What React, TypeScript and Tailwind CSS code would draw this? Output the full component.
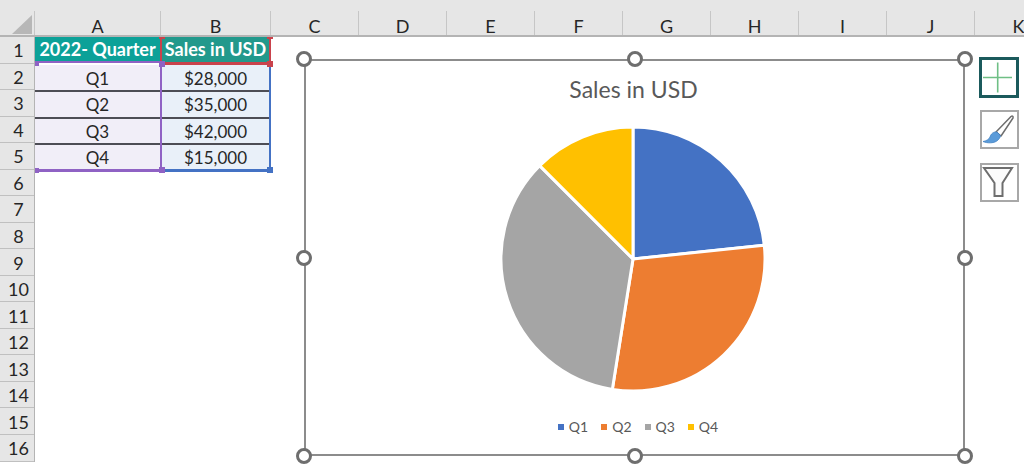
const columns = [
  { label: "A", className: "w-[126px]" },
  { label: "B", className: "w-[110px]" },
  { label: "C", className: "w-[88px]" },
  { label: "D", className: "w-[88px]" },
  { label: "E", className: "w-[88px]" },
  { label: "F", className: "w-[88px]" },
  { label: "G", className: "w-[88px]" },
  { label: "H", className: "w-[88px]" },
  { label: "I", className: "w-[88px]" },
  { label: "J", className: "w-[88px]" },
  { label: "K", className: "w-[88px]" },
];

const rows = [
  ["Q1", "$28,000"],
  ["Q2", "$35,000"],
  ["Q3", "$42,000"],
  ["Q4", "$15,000"],
];

const rowNumbers = Array.from({ length: 16 }, (_, i) => i + 1);

// Pie slices, degrees clockwise from 12 o'clock
const slices = [
  { from: 0, to: 84, color: "#4472c4" },
  { from: 84, to: 189, color: "#ed7d31" },
  { from: 189, to: 315, color: "#a5a5a5" },
  { from: 315, to: 360, color: "#ffc000" },
];

const legend = [
  { label: "Q1", className: "bg-[#4472c4]" },
  { label: "Q2", className: "bg-[#ed7d31]" },
  { label: "Q3", className: "bg-[#a5a5a5]" },
  { label: "Q4", className: "bg-[#ffc000]" },
];

// Little squares on the corners of the highlighted data ranges
const rangeMarks = [
  "left-0 top-[24px] w-[4px] h-[5px] bg-[#8f62c4]",
  "left-0 top-[131px] w-[4px] h-[5px] bg-[#8f62c4]",
  "left-[124px] top-[24px] w-[6px] h-[6px] bg-[#8f62c4]",
  "left-[124px] top-[130px] w-[6px] h-[6px] bg-[#8f62c4]",
  "left-[232px] top-[24px] w-[6px] h-[6px] bg-[#c9424c]",
  "left-[232px] top-[130px] w-[6px] h-[6px] bg-[#4472c4]",
  "left-[124px] top-0 w-[6px] h-[2px] bg-[#c9424c]",
  "left-[232px] top-0 w-[6px] h-[2px] bg-[#c9424c]",
];

const slicePath = (from: number, to: number, r: number) => {
  const point = (deg: number) => {
    const rad = (deg * Math.PI) / 180;
    return `${(r + 2 + r * Math.sin(rad)).toFixed(2)} ${(r + 2 - r * Math.cos(rad)).toFixed(2)}`;
  };
  const large = to - from > 180 ? 1 : 0;
  return `M${r + 2} ${r + 2}L${point(from)}A${r} ${r} 0 ${large} 1 ${point(to)}Z`;
};

const Handle = () => (
  <div className="w-[16px] h-[16px] rounded-full bg-white border-[3px] border-[#6e6e6e]" />
);

export default function App() {
  return (
    <div
      className="relative w-[1024px] h-[466px] overflow-hidden bg-white text-[#262626]"
      style={{ fontFamily: "Lato, 'Open Sans', sans-serif" }}
    >
      {/* Column headers */}
      <div className="flex h-[37px] pt-[11px] bg-[#e6e6e6] border-b-2 border-[#b4b4b4]">
        <div className="relative w-[35px] shrink-0 border-r border-[#c6c6c6]">
          <svg className="absolute right-[2px] bottom-[1px]" width="20" height="19" viewBox="0 0 20 19">
            <path d="M20 0V19H0Z" fill="#b7b7b7" />
          </svg>
        </div>
        {columns.map((col) => (
          <div
            key={col.label}
            className={`${col.className} shrink-0 flex items-end justify-center text-[18px] leading-[18px] border-r border-[#c6c6c6]`}
          >
            {col.label}
          </div>
        ))}
      </div>

      <div className="flex">
        {/* Row headers */}
        <div className="w-[35px] shrink-0 bg-[#e6e6e6] border-r border-[#b4b4b4]">
          {rowNumbers.map((n) => (
            <div
              key={n}
              className="h-[26.54px] flex items-center justify-center pl-[3px] pt-[2px] text-[18px] border-b border-[#c0c0c0]"
            >
              {n}
            </div>
          ))}
        </div>

        {/* Cells */}
        <div className="relative w-[237px] text-[17px]">
          <div className="flex h-[28px] text-white font-bold text-[18px]">
            <div className="w-[125px] h-[26px] bg-[#0ca198] border-b-2 border-[#8f62c4] flex items-center justify-center whitespace-nowrap">
              2022- Quarter
            </div>
            <div className="w-[111px] bg-[#22998c] border-x-2 border-b-[3px] border-[#c9424c] flex items-center justify-center whitespace-nowrap">
              Sales in USD
            </div>
          </div>
          {rows.map(([quarter, sales], i) => {
            const last = i === rows.length - 1;
            return (
              <div key={quarter} className="flex h-[26.75px]">
                <div className={`w-[125px] bg-[#f1eef8] ${last ? "border-b-[3px] border-[#8f62c4]" : ""}`}>
                  <div className={`h-full pt-[2px] flex items-center justify-center ${last ? "" : "border-b-2 border-[#4d4d55]"}`}>
                    {quarter}
                  </div>
                </div>
                <div
                  className={`w-[111px] bg-[#e9f0f9] border-l-2 border-l-[#8f62c4] border-r-2 border-r-[#4472c4] ${
                    last ? "border-b-[3px] border-b-[#4472c4]" : ""
                  }`}
                >
                  <div className={`h-full pt-[2px] flex items-center justify-center ${last ? "" : "border-b-2 border-[#4d4d55]"}`}>
                    {sales}
                  </div>
                </div>
              </div>
            );
          })}

          {rangeMarks.map((mark) => (
            <div key={mark} className={`absolute ${mark}`} />
          ))}
        </div>
      </div>

      {/* Chart object with its side buttons */}
      <div className="absolute left-[304px] top-[57px] flex items-start gap-[14px]">
        <div className="relative mt-[2px] w-[661px] h-[397px] bg-white border-2 border-[#8c8c8c] flex flex-col items-center">
          <div className="mt-[13px] mr-[2px] text-[23px] leading-[30px] text-[#595959]">Sales in USD</div>
          <svg className="mt-[21px] mr-[3px]" width="268" height="268" viewBox="0 0 268 268">
            {slices.map((s) => (
              <path
                key={s.color}
                d={slicePath(s.from, s.to, 132)}
                fill={s.color}
                stroke="#ffffff"
                strokeWidth="3"
                strokeLinejoin="round"
              />
            ))}
          </svg>
          <div className="mt-[25px] ml-[7px] flex items-center gap-[13px] text-[14px] leading-[18px] text-[#595959]">
            {legend.map((item) => (
              <div key={item.label} className="flex items-center gap-[5px]">
                <span className={`w-[6px] h-[6px] ${item.className}`} />
                {item.label}
              </div>
            ))}
          </div>

          {/* Resize handles */}
          <div className="absolute inset-[-10px] flex flex-col justify-between">
            <div className="flex justify-between">
              <Handle />
              <Handle />
              <Handle />
            </div>
            <div className="flex justify-between">
              <Handle />
              <Handle />
            </div>
            <div className="flex justify-between">
              <Handle />
              <Handle />
              <Handle />
            </div>
          </div>
        </div>

        <div className="flex flex-col items-center">
          <div className="w-[40px] h-[41px] bg-white border-[3px] border-[#1b5a5c] flex items-center justify-center">
            <svg width="34" height="35" viewBox="0 0 34 35">
              <path d="M15.7 2.5V32.5M1 17.5H30" stroke="#6fbf85" strokeWidth="1.6" fill="none" />
            </svg>
          </div>
          <div className="mt-[12px] w-[39px] h-[39px] bg-white border-2 border-[#a8a8a8] flex items-center justify-center">
            <svg width="35" height="35" viewBox="0 0 35 35">
              <path
                d="M14 20L29 4.5C30.5 3.5 31.5 4.5 31 6L19 24Z"
                fill="#ffffff"
                stroke="#6e6e6e"
                strokeWidth="1.5"
                strokeLinejoin="round"
              />
              <path
                d="M15 20C11 19.5 9 22 8 25C7 27.5 4 29 1 29.5C5 31.5 13 31.5 16 28C18 26 19 24 18 23Z"
                fill="#5b9bd9"
                stroke="#3f7fc0"
                strokeWidth="0.75"
              />
            </svg>
          </div>
          <div className="mt-[14px] w-[39px] h-[39px] bg-white border-2 border-[#a8a8a8] flex items-center justify-center">
            <svg width="35" height="35" viewBox="0 0 35 35">
              <path
                d="M2 3H30L20.5 18V31H12.5V18Z"
                fill="#fbfbfb"
                stroke="#6e6e6e"
                strokeWidth="2"
                strokeLinejoin="miter"
              />
            </svg>
          </div>
        </div>
      </div>
    </div>
  );
}
